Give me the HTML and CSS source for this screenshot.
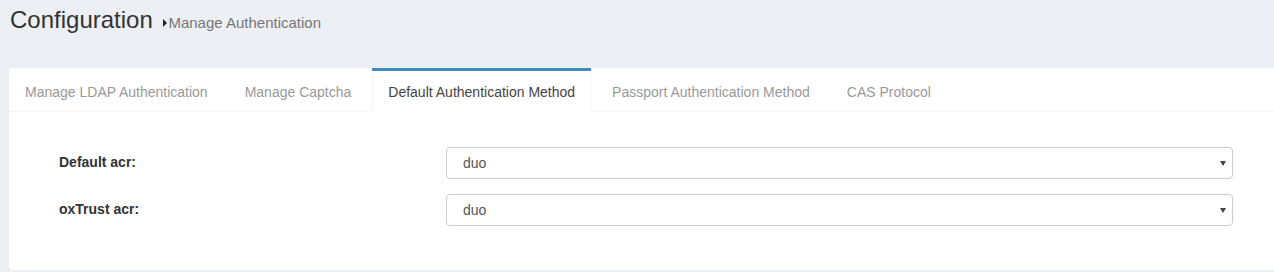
FILE: index.html
```html
<!DOCTYPE html>
<html lang="en">
<head>
  <meta charset="UTF-8">
  <title>Configuration - Manage Authentication</title>
  <link rel="stylesheet" href="styles.css">
</head>
<body>
  <div class="content-wrapper">
    <!-- Header: page title and breadcrumb -->
    <section class="content-header">
      <h1>Configuration <small><span class="caret-right"></span>Manage Authentication</small></h1>
    </section>

    <!-- Tabs box -->
    <section class="content">
      <div class="nav-tabs-custom">
        <ul class="nav-tabs">
          <li><a class="text-muted" href="#">Manage LDAP Authentication</a></li>
          <li><a class="text-muted" href="#">Manage Captcha</a></li>
          <li class="active"><a href="#">Default Authentication Method</a></li>
          <li><a class="text-muted" href="#">Passport Authentication Method</a></li>
          <li><a class="text-muted" href="#">CAS Protocol</a></li>
        </ul>
        <div class="tab-content">
          <form class="acr-form">
            <div class="form-group">
              <label for="default-acr">Default acr:</label>
              <div class="select-wrap">
                <select id="default-acr" class="form-control">
                  <option>duo</option>
                </select>
              </div>
            </div>
            <div class="form-group">
              <label for="oxtrust-acr">oxTrust acr:</label>
              <div class="select-wrap">
                <select id="oxtrust-acr" class="form-control">
                  <option>duo</option>
                </select>
              </div>
            </div>
          </form>
        </div>
      </div>
    </section>
  </div>
</body>
</html>
```

FILE: styles.css
```css
body {
  margin: 0;
  background-color: #ecf0f5;
  font-family: "Liberation Sans", Arial, sans-serif;
  font-size: 14px;
  line-height: 20px;
  color: #333;
  overflow: hidden;
}
.content-wrapper {
  width: 1290px;
}
.content-header {
  padding: 7px 10px 0 10px;
  height: 68px;
  box-sizing: border-box;
}
.content-header h1 {
  margin: 0;
  font-size: 24px;
  font-weight: normal;
  line-height: 26px;
  color: #333;
}
.content-header small {
  font-size: 15px;
  color: #777;
  margin-left: 4px;
}
.caret-right {
  display: inline-block;
  width: 0;
  height: 0;
  border-top: 4px solid transparent;
  border-bottom: 4px solid transparent;
  border-left: 4px solid #222;
  margin-right: 1px;
  vertical-align: 1px;
}
.content {
  padding-left: 9px;
}
.nav-tabs-custom {
  background: #fff;
  border-radius: 3px;
  box-shadow: 0 1px 1px rgba(0, 0, 0, 0.1);
  height: 202px;
}
.nav-tabs {
  display: flex;
  margin: 0;
  padding: 0;
  list-style: none;
  border-bottom: 1px solid #f4f4f4;
}
.nav-tabs li {
  border-top: 3px solid transparent;
  margin-bottom: -1px;
  margin-right: 5px;
}
.nav-tabs li a {
  display: block;
  padding: 10px 15px 9px 15px;
  border: 1px solid transparent;
  color: #444;
  text-decoration: none;
}
.nav-tabs li a.text-muted {
  color: #999;
}
.nav-tabs li.active {
  border-top-color: #3c8dbc;
}
.nav-tabs li.active a {
  background: #fff;
  border-top-color: transparent;
  border-left-color: #f4f4f4;
  border-right-color: #f4f4f4;
}
.tab-content {
  padding: 35px 0 0 50px;
}
.form-group {
  display: grid;
  grid-template-columns: 387px 787px;
  margin-bottom: 15px;
}
.form-group label {
  font-weight: bold;
  color: #333;
  line-height: 20px;
  padding-top: 5px;
}
.select-wrap {
  position: relative;
}
.select-wrap::after {
  content: "";
  position: absolute;
  right: 7px;
  top: 14px;
  border-left: 3px solid transparent;
  border-right: 3px solid transparent;
  border-top: 5px solid #444;
}
.form-control {
  display: block;
  width: 100%;
  height: 32px;
  padding: 0 16px;
  font-family: "Liberation Sans", Arial, sans-serif;
  font-size: 14px;
  color: #555;
  background: #fff;
  border: 1px solid #ccc;
  border-radius: 4px;
  appearance: none;
  -webkit-appearance: none;
}
```
